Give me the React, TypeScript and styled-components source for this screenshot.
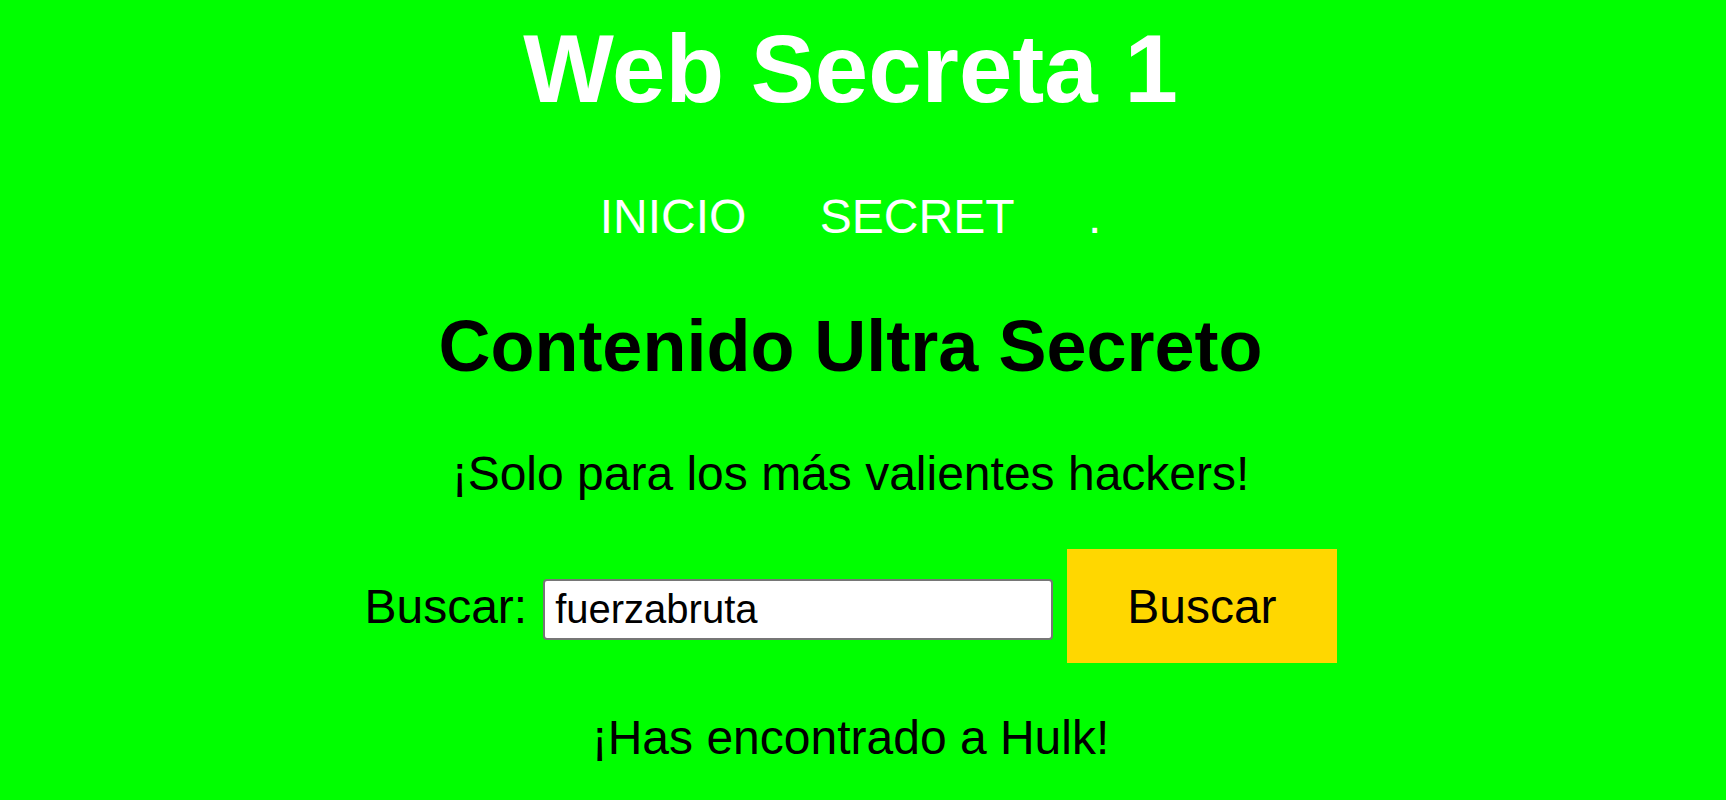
import React from 'react';
import styled, { createGlobalStyle } from 'styled-components';

const GlobalStyle = createGlobalStyle`
  html, body {
    margin: 0;
    padding: 0;
    background: #00ff00;
  }
  body {
    font-family: 'Liberation Sans', Arial, sans-serif;
    color: #000;
  }
`;

const Page = styled.div`
  min-height: 800px;
  padding: 14px 25px 0 0;
  box-sizing: border-box;
  display: flex;
  flex-direction: column;
  align-items: center;
  text-align: center;
`;

const Title = styled.h1`
  margin: 0 0 65px;
  font-size: 96px;
  line-height: 110px;
  font-weight: bold;
  color: #fff;
`;

const Nav = styled.nav`
  display: flex;
  gap: 73.5px;
  font-size: 48px;
  line-height: 55px;
`;

const NavLink = styled.a`
  color: #fff;
  text-decoration: none;
`;

const Heading = styled.h2`
  margin: 61px 0 0;
  font-size: 72px;
  line-height: 83px;
  font-weight: bold;
`;

const Text = styled.p<{ top: number }>`
  margin: ${({ top }) => top}px 0 0;
  font-size: 48px;
  line-height: 55px;
`;

const SearchForm = styled.form`
  margin-top: 48px;
  display: flex;
  align-items: baseline;
  font-size: 48px;
`;

const Label = styled.label`
  margin-right: 16px;
  line-height: 55px;
`;

const Input = styled.input`
  box-sizing: border-box;
  width: 510px;
  height: 61px;
  margin: 0 14px 0 0;
  padding: 0 10px;
  border: 2px solid #767676;
  border-radius: 4px;
  background: #fff;
  font-family: inherit;
  font-size: 40px;
  color: #000;
`;

const Button = styled.button`
  margin: 0;
  padding: 29.5px 60px;
  border: none;
  background: #ffd700;
  font-family: inherit;
  font-size: 48px;
  line-height: 55px;
  color: #000;
  cursor: pointer;
`;

export default function App() {
  return (
    <>
      <GlobalStyle />
      <Page>
        <Title>Web Secreta 1</Title>
        <Nav>
          <NavLink href="#">INICIO</NavLink>
          <NavLink href="#">SECRET</NavLink>
          <NavLink href="#">.</NavLink>
        </Nav>
        <Heading>Contenido Ultra Secreto</Heading>
        <Text top={58}>¡Solo para los más valientes hackers!</Text>
        <SearchForm onSubmit={(e) => e.preventDefault()}>
          <Label htmlFor="q">Buscar:</Label>
          <Input id="q" type="text" defaultValue="fuerzabruta" />
          <Button type="submit">Buscar</Button>
        </SearchForm>
        <Text top={47}>¡Has encontrado a Hulk!</Text>
      </Page>
    </>
  );
}
